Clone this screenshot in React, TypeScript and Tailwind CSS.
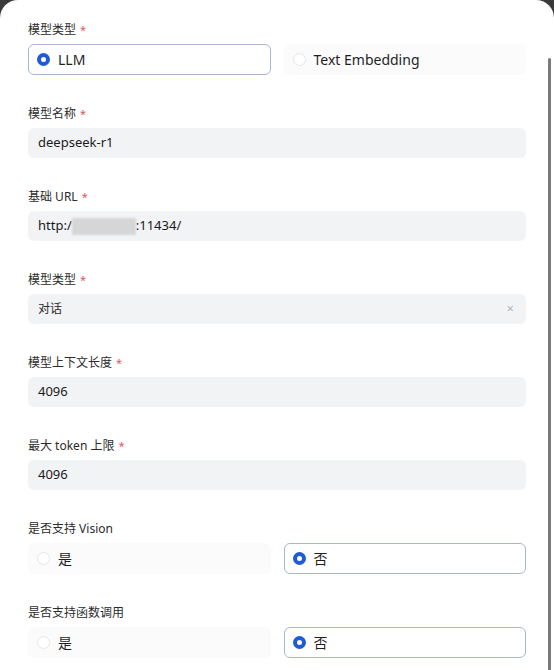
import React from "react";

const font = {
  fontFamily: '"Noto Sans", "Noto Sans CJK SC", sans-serif',
};

function Label({ text, required }: { text: string; required?: boolean }) {
  return (
    <div className="h-[22px] pt-[2px] flex items-center text-[12px] text-[#2b2b2b] leading-5">
      <span>{text}</span>
      {required && <span className="ml-1 text-[11px] text-[#e2555f]">*</span>}
    </div>
  );
}

function Radio({ checked }: { checked: boolean }) {
  return checked ? (
    <span className="w-[13px] h-[13px] rounded-full border-[4px] border-[#1f5bd6] bg-white shrink-0" />
  ) : (
    <span className="w-[13px] h-[13px] rounded-full border border-[#e6e6e6] bg-white shrink-0" />
  );
}

function Option({ label, checked }: { label: string; checked: boolean }) {
  return (
    <div
      className={
        checked
          ? "flex-1 h-[31px] flex items-center gap-[8px] px-[8px] rounded-md border border-[#a9b6d3] bg-white text-[14px] text-[#1f1f1f]"
          : "flex-1 h-[31px] flex items-center gap-[8px] px-[8px] rounded-md border border-transparent bg-[#fbfbfb] text-[14px] text-[#1f1f1f]"
      }
    >
      <Radio checked={checked} />
      <span>{label}</span>
    </div>
  );
}

function RadioRow({ a, b, pick }: { a: string; b: string; pick: 0 | 1 }) {
  return (
    <div className="flex gap-[13px]">
      <Option label={a} checked={pick === 0} />
      <Option label={b} checked={pick === 1} />
    </div>
  );
}

function Field({ children }: { children: React.ReactNode }) {
  return (
    <div className="h-[30px] flex items-center px-[10px] rounded-md bg-[#f2f3f5] text-[13px] text-[#1a1a1a]">
      {children}
    </div>
  );
}

function Block({
  label,
  required,
  children,
}: {
  label: string;
  required?: boolean;
  children: React.ReactNode;
}) {
  return (
    <div className="flex flex-col gap-[4px]">
      <Label text={label} required={required} />
      {children}
    </div>
  );
}

export default function App() {
  return (
    <div className="w-[554px] h-[670px] bg-[#3a3a3a] overflow-hidden" style={font}>
      <div className="relative w-full h-full bg-white rounded-t-[18px]">
        {/* scrollbar */}
        <div className="absolute right-[3px] top-[58px] w-[3px] h-[620px] rounded-full bg-[#7a7a7a]" />
        <div className="pt-[18px] pl-[28px] pr-[28px] flex flex-col gap-[27px]">
          <Block label="模型类型" required>
            <RadioRow a="LLM" b="Text Embedding" pick={0} />
          </Block>
          <Block label="模型名称" required>
            <Field>deepseek-r1</Field>
          </Block>
          <Block label="基础 URL" required>
            <Field>
              <span>http:/</span>
              <span className="inline-block w-[64px] h-[17px] bg-[#d6d6d6] blur-[1px]" />
              <span>:11434/</span>
            </Field>
          </Block>
          <Block label="模型类型" required>
            <div className="h-[30px] flex items-center justify-between px-[10px] rounded-md bg-[#f2f3f5] text-[12px] text-[#2b2b2b]">
              <span>对话</span>
              <span className="text-[13px] text-[#b5b5b5] mr-[2px]">×</span>
            </div>
          </Block>
          <Block label="模型上下文长度" required>
            <Field>4096</Field>
          </Block>
          <Block label="最大 token 上限" required>
            <Field>4096</Field>
          </Block>
          <Block label="是否支持 Vision">
            <RadioRow a="是" b="否" pick={1} />
          </Block>
          <Block label="是否支持函数调用">
            <RadioRow a="是" b="否" pick={1} />
          </Block>
        </div>
      </div>
    </div>
  );
}
